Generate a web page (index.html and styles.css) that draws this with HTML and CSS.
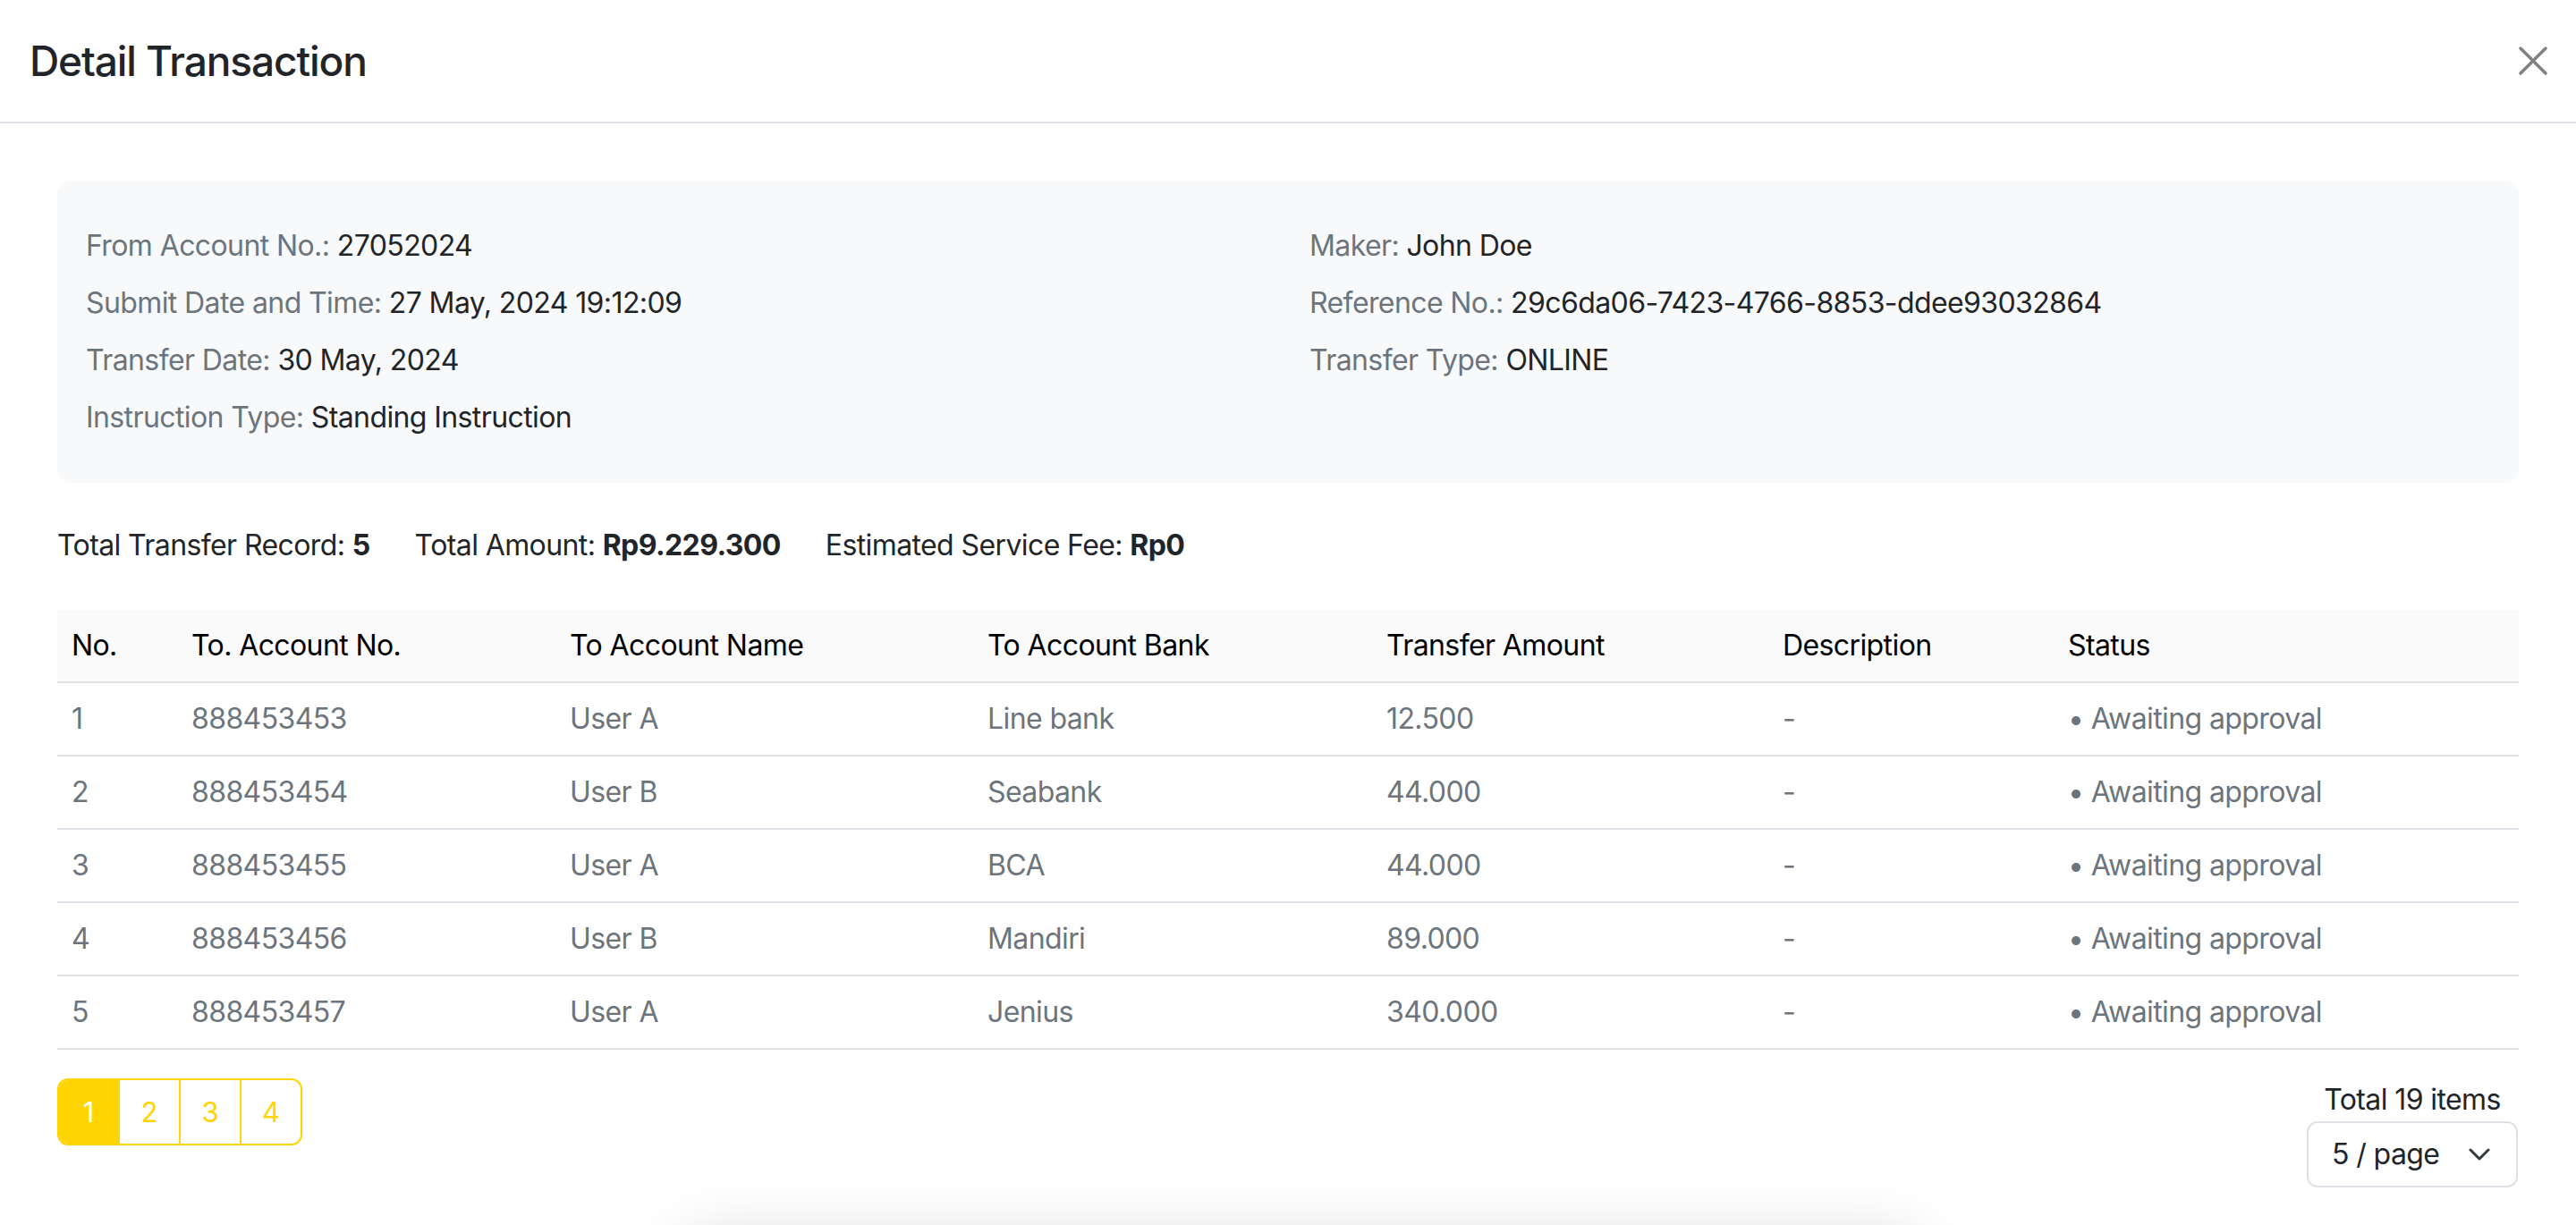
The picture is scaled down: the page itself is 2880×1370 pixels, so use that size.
FILE: index.html
```html
<!DOCTYPE html>
<html lang="en">
<head>
<meta charset="utf-8">
<title>Detail Transaction</title>
<link rel="stylesheet" href="styles.css">
</head>
<body>
<div class="modal">
  <header class="modal-header">
    <h5 class="modal-title">Detail Transaction</h5>
    <button class="close-btn" aria-label="Close">
      <svg width="32" height="32" viewBox="0 0 32 32"><path d="M2 2 L30 30 M30 2 L2 30" stroke="#808080" stroke-width="3.4" stroke-linecap="round" fill="none"/></svg>
    </button>
  </header>
  <main class="modal-body">
    <section class="info-box">
      <div class="info-col">
        <div class="info-item"><span class="label">From Account No.:</span> <span class="value">27052024</span></div>
        <div class="info-item"><span class="label">Submit Date and Time:</span> <span class="value">27 May, 2024 19:12:09</span></div>
        <div class="info-item"><span class="label">Transfer Date:</span> <span class="value">30 May, 2024</span></div>
        <div class="info-item"><span class="label">Instruction Type:</span> <span class="value">Standing Instruction</span></div>
      </div>
      <div class="info-col">
        <div class="info-item"><span class="label">Maker:</span> <span class="value">John Doe</span></div>
        <div class="info-item"><span class="label">Reference No.:</span> <span class="value">29c6da06-7423-4766-8853-ddee93032864</span></div>
        <div class="info-item"><span class="label">Transfer Type:</span> <span class="value">ONLINE</span></div>
      </div>
    </section>

    <div class="summary">
      <span>Total Transfer Record: <b>5</b></span>
      <span>Total Amount: <b>Rp9.229.300</b></span>
      <span>Estimated Service Fee: <b>Rp0</b></span>
    </div>

    <table class="tx-table">
      <colgroup>
        <col class="c-no"><col class="c-acc"><col class="c-name"><col class="c-bank"><col class="c-amt"><col class="c-desc"><col class="c-status">
      </colgroup>
      <thead>
        <tr><th>No.</th><th>To. Account No.</th><th>To Account Name</th><th>To Account Bank</th><th>Transfer Amount</th><th>Description</th><th>Status</th></tr>
      </thead>
      <tbody>
        <tr><td>1</td><td>888453453</td><td>User A</td><td>Line bank</td><td>12.500</td><td>-</td><td>• Awaiting approval</td></tr>
        <tr><td>2</td><td>888453454</td><td>User B</td><td>Seabank</td><td>44.000</td><td>-</td><td>• Awaiting approval</td></tr>
        <tr><td>3</td><td>888453455</td><td>User A</td><td>BCA</td><td>44.000</td><td>-</td><td>• Awaiting approval</td></tr>
        <tr><td>4</td><td>888453456</td><td>User B</td><td>Mandiri</td><td>89.000</td><td>-</td><td>• Awaiting approval</td></tr>
        <tr><td>5</td><td>888453457</td><td>User A</td><td>Jenius</td><td>340.000</td><td>-</td><td>• Awaiting approval</td></tr>
      </tbody>
    </table>

    <div class="footer-row">
      <nav class="pagination">
        <span class="page active">1</span>
        <span class="page">2</span>
        <span class="page">3</span>
        <span class="page">4</span>
      </nav>
      <div class="page-size">
        <div class="total">Total 19 items</div>
        <div class="select">
          <span>5 / page</span>
          <svg width="24" height="14" viewBox="0 0 24 14"><path d="M2 2 L12 12 L22 2" stroke="#343a40" stroke-width="3" fill="none" stroke-linecap="round" stroke-linejoin="round"/></svg>
        </div>
      </div>
    </div>
  </main>
  <div class="shadow-clip"><div class="float-shadow"></div></div>
</div>
</body>
</html>
```

FILE: styles.css
```css
html, body {
  margin: 0;
  padding: 0;
  overflow: hidden;
  background: #ffffff;
}

body {
  font-family: Inter, "Noto Sans", "Liberation Sans", sans-serif;
  color: #212529;
  font-size: 32px;
  line-height: 48px;
  letter-spacing: -0.6px;
}

.modal {
  position: relative;
  width: 2880px;
  height: 1370px;
  overflow: hidden;
}

.modal-header {
  height: 136px;
  padding: 0 32px 0 33px;
  display: flex;
  align-items: center;
  justify-content: space-between;
  border-bottom: 2px solid #dee2e6;
}

.modal-title {
  margin: 0;
  font-size: 46px;
  font-weight: 500;
  line-height: 60px;
  color: #212529;
  letter-spacing: -1.1px;
}

.close-btn {
  border: 0;
  background: none;
  padding: 0;
  width: 32px;
  height: 32px;
  display: flex;
}

.modal-body {
  padding: 64px 64px 0 64px;
}

.info-box {
  background: #f8f9fa;
  border-radius: 16px;
  padding: 49px 32px 49px 32px;
  display: grid;
  grid-template-columns: 1fr 1fr;
  column-gap: 48px;
}

.info-col {
  display: flex;
  flex-direction: column;
  gap: 16px;
}

.label {
  color: #6c757d;
}

.value {
  color: #212529;
}

.summary {
  margin-top: 46px;
  display: flex;
  gap: 50px;
  color: #212529;
}

.summary b {
  font-weight: 700;
}

.tx-table {
  margin-top: 48px;
  width: 100%;
  border-collapse: collapse;
  table-layout: fixed;
}

.c-no { width: 134px; }
.c-acc { width: 423px; }
.c-name { width: 467px; }
.c-bank { width: 446px; }
.c-amt { width: 443px; }
.c-desc { width: 319px; }

.tx-table th {
  background: #fafafa;
  color: #000000;
  font-weight: 400;
  text-align: left;
  height: 80px;
  padding: 0 16px;
  border-bottom: 2px solid #dee2e6;
}

.tx-table td {
  color: #6c757d;
  height: 80px;
  padding: 0 16px;
  border-bottom: 2px solid #dee2e6;
}

.footer-row {
  margin-top: 32px;
  display: flex;
  justify-content: space-between;
  align-items: flex-start;
}

.pagination {
  display: flex;
  border: 2px solid #ffd500;
  border-radius: 12px;
  overflow: hidden;
}

.page {
  width: 66px;
  height: 71px;
  display: flex;
  align-items: center;
  justify-content: center;
  color: #ffd500;
  font-size: 31px;
  letter-spacing: 0;
  border-left: 2px solid #ffd500;
}

.page:first-child {
  border-left: 0;
}

.page.active {
  background: #ffd500;
  color: #ffffff;
}

.page-size {
  display: flex;
  flex-direction: column;
  align-items: center;
  margin-right: 1px;
}

.total {
  line-height: 48px;
  color: #212529;
}

.select {
  height: 70px;
  border: 2px solid #dee2e6;
  border-radius: 12px;
  display: flex;
  align-items: center;
  justify-content: space-between;
  padding: 0 29px 0 26px;
  box-sizing: content-box;
  width: 177px;
  color: #212529;
}

.shadow-clip {
  position: absolute;
  left: 0;
  right: 0;
  bottom: 0;
  height: 130px;
  overflow: hidden;
}

.float-shadow {
  position: absolute;
  left: 760px;
  width: 1390px;
  top: 145px;
  height: 200px;
  border-radius: 40px;
  background: #ffffff;
  box-shadow: 0 0 70px rgba(0, 0, 0, 0.16);
}
```
